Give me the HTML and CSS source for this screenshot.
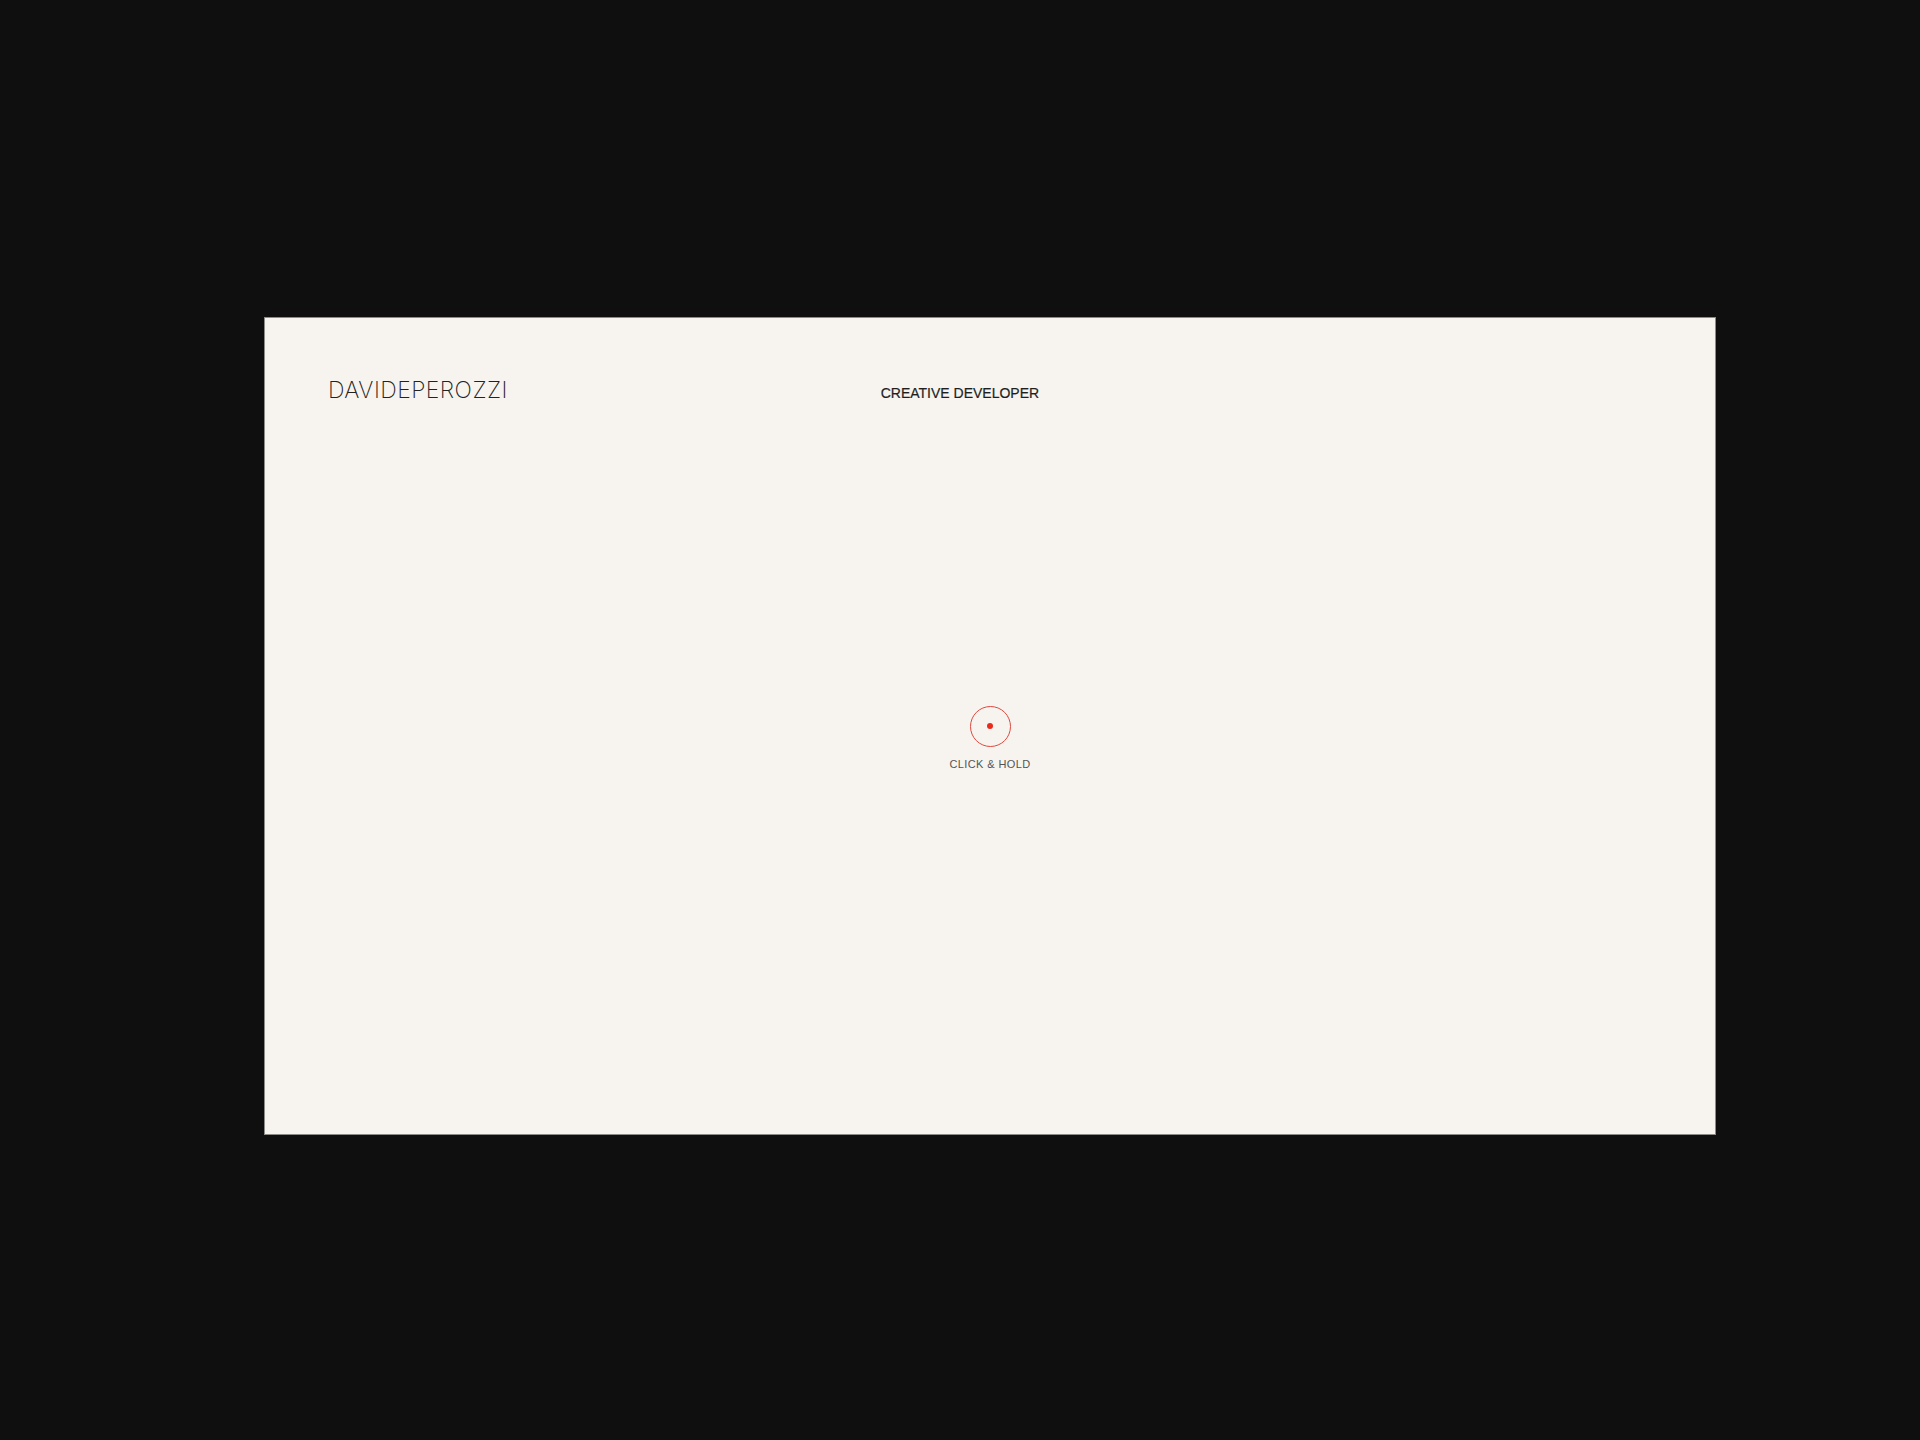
FILE: index.html
```html
<!DOCTYPE html>
<html lang="en">
<head>
<meta charset="utf-8">
<title>Davide Perozzi — Creative Developer</title>
<link rel="stylesheet" href="styles.css">
</head>
<body>
<div class="stage">
  <main class="card">
    <header class="top">
      <div class="logo">DAVIDEPEROZZI</div>
      <div class="role">CREATIVE DEVELOPER</div>
    </header>
    <div class="hint">
      <div class="ring"><span class="dot"></span></div>
      <div class="hint-label">CLICK &amp; HOLD</div>
    </div>
  </main>
</div>
</body>
</html>
```
FILE: styles.css
```css
html, body {
  margin: 0;
  padding: 0;
  background: #0f0f0f;
}
body {
  width: 1920px;
  height: 1440px;
  overflow: hidden;
}
.stage {
  padding: 318px 0 0 265px;
}
.card {
  width: 1450px;
  height: 816px;
  box-sizing: border-box;
  background: #f7f4f0;
  box-shadow: 0 0 0 1px #8d8b88;
  display: grid;
  grid-template-columns: 1fr;
  grid-template-rows: 1fr;
}
.top {
  grid-area: 1 / 1;
  align-self: start;
  display: grid;
  grid-template-columns: 5fr 7fr;
  align-items: baseline;
  padding: 57px 63px 0 63px;
}
.logo {
  font-family: "Inter", "Liberation Sans", sans-serif;
  font-weight: 250;
  font-size: 23px;
  letter-spacing: 0.45px;
  color: #222;
  line-height: 30px;
}
.role {
  font-family: "Liberation Sans", Arial, sans-serif;
  font-size: 14px;
  color: #1f1f1f;
  line-height: 20px;
  -webkit-text-stroke: 0.2px #1f1f1f;
  padding-left: 1px;
  padding-top: 1px;
}
.hint {
  grid-area: 1 / 1;
  align-self: center;
  justify-self: center;
  display: flex;
  flex-direction: column;
  align-items: center;
  gap: 11px;
  padding-top: 24px;
}
.ring {
  width: 39px;
  height: 39px;
  border: 1.7px solid #e2463d;
  border-radius: 50%;
  display: flex;
  align-items: center;
  justify-content: center;
}
.dot {
  width: 6px;
  height: 6px;
  border-radius: 50%;
  background: #ea2a1c;
}
.hint-label {
  font-family: "Liberation Sans", Arial, sans-serif;
  font-size: 11px;
  line-height: 13px;
  letter-spacing: 0.4px;
  color: #555350;
}
```
